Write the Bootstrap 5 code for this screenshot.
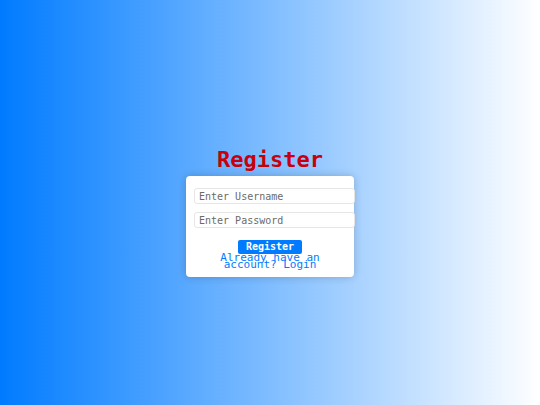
<!DOCTYPE html>
<html lang="en">
<head>
<meta charset="utf-8">
<meta name="viewport" content="width=device-width, initial-scale=1">
<title>Register</title>
<link href="https://cdn.jsdelivr.net/npm/bootstrap@5.3.0/dist/css/bootstrap.min.css" rel="stylesheet">
<style>
body {
  font-family: "DejaVu Sans Mono", "Liberation Mono", monospace;
  background: linear-gradient(to right, #007bff, #fff);
}
.page-title {
  color: #c8000c;
  font-size: 22px;
  line-height: 20px;
  padding-top: 22px;
  margin-bottom: 6px;
}
.register-card {
  width: 168px;
  padding: 12px 8px 9px;
  border-radius: 4px;
  box-shadow: 0 0 8px rgba(0, 0, 0, .2);
}
.register-field {
  width: calc(100% + 9px);
  height: 16px;
  padding: 0 4px;
  border: 1px solid #e6e6e6;
  border-radius: 3px;
  font-size: 10px;
  line-height: 14px;
}
.register-field::placeholder { color: #6a6a6a; opacity: 1; }
.register-btn {
  --bs-btn-bg: #007bff;
  --bs-btn-color: #fff;
  --bs-btn-hover-bg: #0069d9;
  --bs-btn-hover-color: #fff;
  --bs-btn-border-width: 0;
  --bs-btn-border-radius: 2px;
  --bs-btn-padding-x: 8px;
  --bs-btn-padding-y: 0;
  --bs-btn-font-size: 10px;
  --bs-btn-font-weight: 700;
  --bs-btn-line-height: 14px;
  margin-top: 4px;
}
.login-link {
  color: #007bff;
  font-size: 11px;
  line-height: 7px;
  padding: 0 16px;
}
</style>
</head>
<body>
<main class="min-vh-100 d-flex flex-column align-items-center justify-content-center">
  <h1 class="page-title fw-bold text-center">Register</h1>
  <div class="card register-card border-0">
    <form class="d-flex flex-column gap-2">
      <input type="text" class="form-control register-field" placeholder="Enter Username" aria-label="Username" autocomplete="username">
      <input type="password" class="form-control register-field" placeholder="Enter Password" aria-label="Password" autocomplete="new-password">
      <button type="submit" class="btn register-btn align-self-center">Register</button>
    </form>
    <a href="#login" class="login-link d-block text-center text-decoration-none">Already have an account? Login</a>
  </div>
</main>
<script src="https://cdn.jsdelivr.net/npm/bootstrap@5.3.0/dist/js/bootstrap.bundle.min.js"></script>
</body>
</html>
